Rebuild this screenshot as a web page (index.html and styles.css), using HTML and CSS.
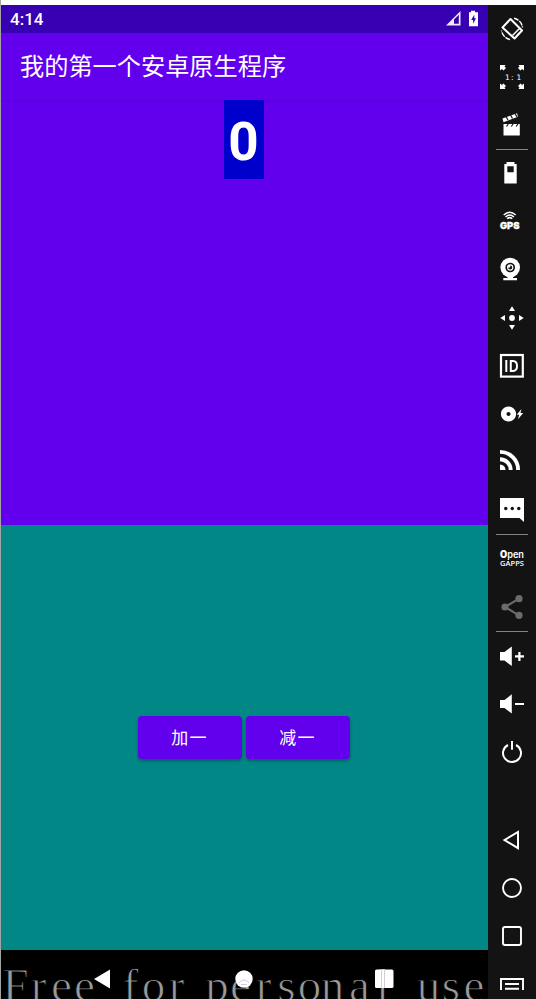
FILE: index.html
```html
<!DOCTYPE html>
<html lang="zh-CN">
<head>
<meta charset="utf-8">
<title>我的第一个安卓原生程序</title>
<link rel="stylesheet" href="styles.css">
</head>
<body>
<div class="emulator">
  <main class="phone">
    <div class="status">
      <span class="clock">4:14</span>
      <svg class="status-icons" width="34" height="18" viewBox="0 0 34 18">
        <path d="M1 15.5 15.5 1V15.5Z" fill="#efe9fa"/>
        <path d="M9 9.500 13.800 4.800V13.800H9Z" fill="#3700b3"/>
        <path d="M26 .8h4v1.400h3v14.100h-9V2.200h2Z" fill="#fff"/>
        <path d="M29.300 4.500 26.200 10h1.900v3.800L31 8.300h-1.700Z" fill="#3700b3"/>
      </svg>
    </div>
    <header class="appbar">我的第一个安卓原生程序</header>
    <section class="display"><span class="count">0</span></section>
    <section class="controls">
      <button class="btn">加一</button>
      <button class="btn">减一</button>
    </section>
    <nav class="navbar">
      <svg width="487" height="49" viewBox="0 0 487 49">
        <text class="watermark" y="50.500" x="14.500 37.500 60.500 83.500 106.500 129.500 152.500 175.500 198.500 216 239.500 262.500 285.500 308.500 331.500 358.500 381.500 404.500 427.500 450 473">Free for personal use</text>
        <g fill="#fff">
          <path d="M93 29 109 19.500V38.500Z"/>
          <circle cx="243" cy="29" r="8.700"/>
          <rect x="374" y="19.500" width="18.500" height="18.500" rx="1.500"/>
        </g>
        <path d="M380.500 20v18M383.500 19v19M238 33q5-6 10 0M240 34.500h6" fill="none" stroke="#d3cdde"/>
      </svg>
    </nav>
  </main>
  <aside class="tools">
    <svg class="tool" viewBox="0 0 48 48">
      <g class="line"><path d="M22.500 14 34 25.500 26.500 33.500 14.500 22.500Z" stroke-width="2" stroke-linejoin="round"/><path d="M31.500 23.500 24.500 30.500M31.500 28l-2.500 2.500" stroke-width="1.500"/><path d="M26 13.300A10.800 10.800 0 0 1 34.500 22.500M22 34.500A10.800 10.800 0 0 1 13.500 25.500" stroke-width="1.400" stroke-dasharray="5 1"/></g>
    </svg>
    <svg class="tool" viewBox="0 0 48 48">
      <path id="corner" d="M12 12h5.500l-1 1.500 1.500 1.500-2.500 2.500-1.600-1.600L12 17.500Z"/>
      <use href="#corner" transform="matrix(-1 0 0 1 48 0)"/><use href="#corner" transform="matrix(1 0 0 -1 0 48)"/><use href="#corner" transform="rotate(180 24 24)"/>
      <text class="ratio" x="17 23 28.500" y="27">1:1</text>
    </svg>
    <svg class="tool" viewBox="0 0 48 48">
      <path d="M15.500 23h16.300v11.500H15.500ZM14.500 17.500 29 12.300l1 3.400-14.500 5.500Z"/>
      <path d="m18 15.500 2 3.500m2.500-5 2 3.500m2.500-5 2 3.500M18.500 25.500l1.800-2.500m3 2.500 1.800-2.500m3 2.500 1.800-2.500" stroke="#131313" stroke-width="1.200"/>
    </svg>
    <hr>
    <svg class="tool" viewBox="0 0 48 48">
      <path fill-rule="evenodd" d="M18.500 12h8v2h2.200v19.500H16.300V14h2.200ZM19.300 16.300v6h6.400v-6Z"/>
    </svg>
    <svg class="tool" viewBox="0 0 48 48">
      <g class="line" stroke-width="1.500"><path d="M15.700 17Q21.700 11.500 27.700 17M17.500 19Q21.700 15 25.900 19M19.200 20.800Q21.700 18.500 24.200 20.800"/></g>
      <text class="gps" x="12" y="31.300" textLength="19.500" lengthAdjust="spacingAndGlyphs">GPS</text>
    </svg>
    <svg class="tool" viewBox="0 0 48 48">
      <circle cx="22.200" cy="21.500" r="9.800"/><circle cx="22.200" cy="21.500" r="4" fill="none" stroke="#131313" stroke-width="1.700"/><path d="M22.200 19.500v2h-2a2 2 0 1 0 2-2" fill="#131313"/>
      <path d="M19.500 30h5.500v2h4v2.200H15.300V32h4.200Z"/>
    </svg>
    <svg class="tool" viewBox="0 0 48 48">
      <circle cx="24" cy="24" r="2.900"/><path d="m24 12.300 3 4.700h-6Zm0 23.400-3-4.700h6ZM12.300 24l4.700-3v6Zm23.400 0L31 27v-6Z"/>
    </svg>
    <svg class="tool" viewBox="0 0 48 48">
      <rect class="line" x="13" y="13" width="21.800" height="21.600" stroke-width="2.200"/>
      <path class="line" d="M18.300 18v12M22.800 19v10h2.200q4-.2 4-5t-4-5Z" stroke-width="2"/>
    </svg>
    <svg class="tool" viewBox="0 0 48 48">
      <path fill-rule="evenodd" d="M20.500 16.400a7.600 7.600 0 1 0 .01 0ZM20.500 22a2 2 0 1 1-.01 0Z"/><path d="m33.500 19-4.800 5.800h2.500L30 29.300l5.200-6.300h-2.700Z"/>
    </svg>
    <svg class="tool" viewBox="0 0 48 48">
      <path d="M12 26.500a5.500 5.500 0 0 1 5.500 5.500H12Z"/><path class="line" d="M12 21.300A10.700 10.700 0 0 1 22.700 32M12 13.900A18.100 18.100 0 0 1 30.100 32" stroke-width="3.900"/>
    </svg>
    <svg class="tool" viewBox="0 0 48 48">
      <path d="M12 12h24v24l-4.500-4H12Z"/><g fill="#131313"><circle cx="17.800" cy="22.500" r="1.700"/><circle cx="24.300" cy="22.500" r="1.700"/><circle cx="30.800" cy="22.500" r="1.700"/></g>
    </svg>
    <hr>
    <svg class="tool" viewBox="0 0 48 48">
      <text class="open" x="12" y="22.700" textLength="24" lengthAdjust="spacingAndGlyphs"><tspan class="open-o">O</tspan>pen</text>
      <text class="gapps" x="12" y="31.400" textLength="24" lengthAdjust="spacingAndGlyphs">GAPPS</text>
    </svg>
    <svg class="tool muted" viewBox="0 0 48 48">
      <path d="M31 15.700 17 24l14 8.300" fill="none" stroke="#6b6b6b" stroke-width="2"/><circle cx="31" cy="15.700" r="3.600"/><circle cx="17" cy="24" r="3.600"/><circle cx="31" cy="32.300" r="3.600"/>
    </svg>
    <hr>
    <svg class="tool" viewBox="0 0 48 48">
      <path d="M12 20h4.500l7.300-5.500v19.600L16.500 28.500H12ZM30.300 20h2.200v3.300H36v2.200h-3.500v3.500h-2.200v-3.500H27v-2.200h3.300Z"/>
    </svg>
    <svg class="tool" viewBox="0 0 48 48">
      <path d="M12 20h4.500l7.300-5.800v19.300L16.500 28H12ZM27 23h9v2h-9Z"/>
    </svg>
    <svg class="tool" viewBox="0 0 48 48">
      <path class="line" d="M20 17a9 9 0 1 0 8 0M24 13v8.700" stroke-width="2"/>
    </svg>
    <div class="spacer"></div>
    <svg class="tool" viewBox="0 0 48 48"><path class="line" d="M16.500 24 30 16v16.200Z" stroke-width="2"/></svg>
    <svg class="tool" viewBox="0 0 48 48"><circle class="line" cx="24" cy="24" r="9" stroke-width="1.900"/></svg>
    <svg class="tool" viewBox="0 0 48 48"><rect class="line" x="15" y="15" width="18" height="18" rx="2" stroke-width="1.900"/></svg>
    <svg class="tool" viewBox="0 0 48 48"><path class="line" d="M13 30V19h22v11M17 24h14M17 28.800h14" stroke-width="1.900"/></svg>
  </aside>
</div>
</body>
</html>
```
FILE: styles.css
```css
* { box-sizing: border-box; }

body {
  margin: 0;
  background: #fff;
  font-family: Roboto, "Noto Sans CJK SC", sans-serif;
}

.emulator {
  display: flex;
  height: 999px;
  padding-top: 5px;
  border-left: 1px solid #a4a4a4;
  overflow: hidden;
}

.phone {
  width: 487px;
  display: flex;
  flex-direction: column;
  color: #fff;
}

.status {
  height: 28px;
  padding: 0 9px;
  display: flex;
  align-items: center;
  justify-content: space-between;
  background: #3700b3;
}

.clock {
  font-size: 17px;
  font-weight: 500;
}

.appbar {
  height: 67px;
  padding-left: 19px;
  background: #6200ee;
  font-size: 24.200px;
  line-height: 68px;
}

.display {
  height: 424.500px;
  padding-right: 2px;
  background: linear-gradient(#5a00dc, #6200ee 3px);
  text-align: center;
}

.count {
  display: inline-block;
  width: 40px;
  height: 79px;
  background: #0000cc;
  font-size: 53px;
  font-weight: 700;
  line-height: 84px;
}

.controls {
  height: 425.500px;
  padding-right: 2px;
  display: flex;
  align-items: center;
  justify-content: center;
  gap: 4px;
  background: #018786;
}

.btn {
  width: 104px;
  height: 43px;
  padding: 0 0 1px;
  border: 0;
  border-radius: 4px;
  background: #6200ee;
  color: #fff;
  font: 400 17px Roboto, "Noto Sans CJK SC", sans-serif;
  letter-spacing: 1.200px;
  box-shadow: 0 2px 3px rgba(0, 0, 0, .3);
}

.navbar {
  height: 49px;
  background: #000;
}

.navbar svg { display: block; }

.watermark {
  font: 47px "Liberation Serif", serif;
  text-anchor: middle;
  fill: #9a9a9a;
  stroke: #000;
  stroke-width: 1px;
}

.tools {
  width: 48px;
  display: flex;
  flex-direction: column;
  background: #131313;
}

.tools hr {
  width: 32px;
  height: 1px;
  flex: none;
  margin: 0 auto;
  border: 0;
  background: #858585;
}

.tool {
  display: block;
  flex: none;
  width: 48px;
  height: 48px;
  fill: #fff;
}

.muted { fill: #6b6b6b; }

.line {
  fill: none;
  stroke: #fff;
}

.spacer {
  height: 40px;
  flex: none;
}

.ratio { font: 7.500px "DejaVu Sans", sans-serif; }

.gps {
  font: 900 9.500px Inter, sans-serif;
  stroke: #fff;
  stroke-width: .3px;
}

.open { font: 600 10px Inter, sans-serif; }
.open-o { font-weight: 900; }
.gapps { font: 600 7.300px "Open Sans", sans-serif; }
```
